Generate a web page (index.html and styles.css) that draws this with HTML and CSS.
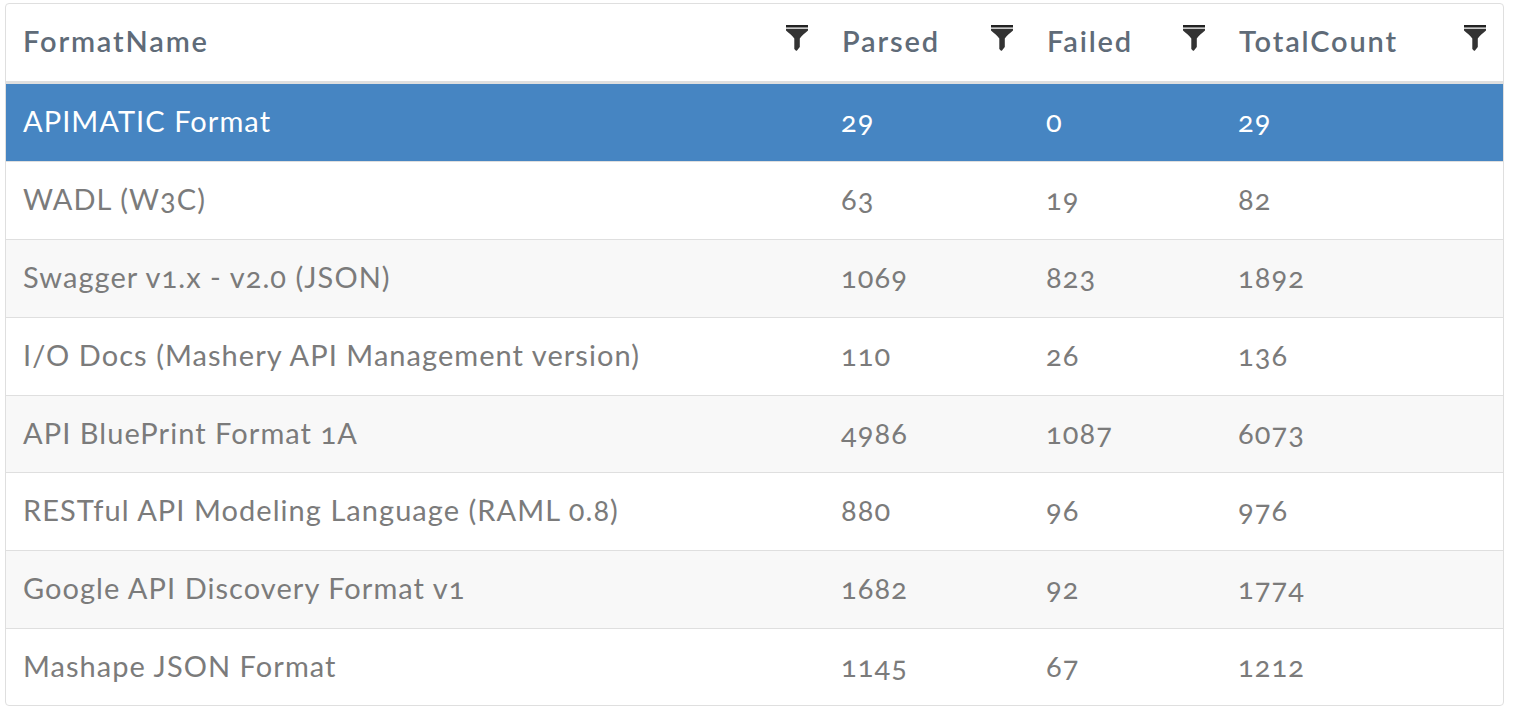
FILE: index.html
```html
<!DOCTYPE html>
<html lang="en">
<head>
<meta charset="utf-8">
<title>Format statistics</title>
<link rel="stylesheet" href="styles.css">
</head>
<body>
<svg class="defs" width="0" height="0" aria-hidden="true">
  <symbol id="funnel" viewBox="0 0 22 26">
    <rect x="0" y="0" width="22" height="2.500" fill="#222"/>
    <path d="M0 3.800H22V5.500C19 8.500 16 10 13.800 13.500V22L10.800 25.700H10L8.300 24V13.500C6 10 3 8.500 0 5.500Z" fill="#333"/>
  </symbol>
</svg>
<main class="panel">
  <table class="grid">
    <colgroup>
      <col class="c-name"><col class="c-parsed"><col class="c-failed"><col class="c-total">
    </colgroup>
    <thead>
      <tr>
        <th><div class="head"><span>FormatName</span><svg class="filter"><use href="#funnel"/></svg></div></th>
        <th><div class="head"><span>Parsed</span><svg class="filter"><use href="#funnel"/></svg></div></th>
        <th><div class="head"><span>Failed</span><svg class="filter"><use href="#funnel"/></svg></div></th>
        <th><div class="head"><span>TotalCount</span><svg class="filter"><use href="#funnel"/></svg></div></th>
      </tr>
    </thead>
    <tbody>
      <tr class="selected"><td>APIMATIC Format</td><td>29</td><td>0</td><td>29</td></tr>
      <tr><td>WADL (W3C)</td><td>63</td><td>19</td><td>82</td></tr>
      <tr class="alt"><td>Swagger v1.x - v2.0 (JSON)</td><td>1069</td><td>823</td><td>1892</td></tr>
      <tr><td>I/O Docs (Mashery API Management version)</td><td>110</td><td>26</td><td>136</td></tr>
      <tr class="alt"><td>API BluePrint Format 1A</td><td>4986</td><td>1087</td><td>6073</td></tr>
      <tr><td>RESTful API Modeling Language (RAML 0.8)</td><td>880</td><td>96</td><td>976</td></tr>
      <tr class="alt"><td>Google API Discovery Format v1</td><td>1682</td><td>92</td><td>1774</td></tr>
      <tr><td>Mashape JSON Format</td><td>1145</td><td>67</td><td>1212</td></tr>
    </tbody>
  </table>
</main>
</body>
</html>
```

FILE: styles.css
```css
html, body {
  margin: 0;
  background: #fff;
}
body {
  padding: 3px 16px 0 5px;
  font-family: Lato, "Open Sans", "Liberation Sans", sans-serif;
  font-feature-settings: "onum" 1;
  overflow: hidden;
}
.defs {
  position: absolute;
}
.panel {
  width: 1499px;
  height: 703px;
  box-sizing: border-box;
  border: 1px solid #dfdfdf;
  border-radius: 4px;
  overflow: hidden;
}
.grid {
  width: 100%;
  border-collapse: separate;
  border-spacing: 0;
  table-layout: fixed;
  font-size: 29px;
  letter-spacing: 1.050px;
  color: #7b7b7b;
}
.c-name { width: 819px; }
.c-parsed { width: 205px; }
.c-failed { width: 192px; }
.c-total { width: 281px; }
th {
  height: 77px;
  padding: 0;
  border-bottom: 3px solid #dfdfdf;
  text-align: left;
  font-weight: 600;
  letter-spacing: 1.850px;
  color: #5f6b78;
}
.head {
  display: flex;
  justify-content: space-between;
  align-items: center;
  box-sizing: border-box;
  height: 77px;
  padding: 0 17px 4px 17px;
}
.filter {
  width: 22px;
  height: 26px;
  align-self: flex-start;
  margin-top: 21px;
}
td {
  height: 77.700px;
  box-sizing: border-box;
  padding: 0 17px 4px 16px;
  border-top: 1px solid #dfdfdf;
  white-space: nowrap;
}
td:first-child {
  padding-left: 17px;
}
.selected td {
  height: 77px;
  border-top: 0;
  background: #4685c2;
  color: #fff;
}
.selected + tr td {
  height: 78.400px;
}
.alt td {
  background: #f8f8f8;
}
```
